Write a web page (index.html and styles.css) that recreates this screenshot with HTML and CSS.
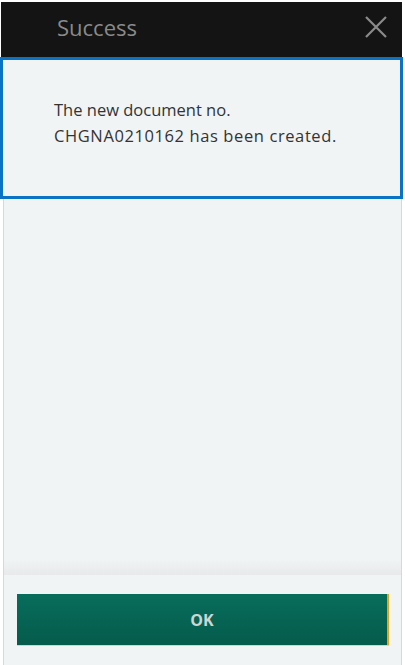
FILE: index.html
```html
<!DOCTYPE html>
<html>
<head>
<meta charset="utf-8">
<link rel="stylesheet" href="styles.css">
</head>
<body>
<div class="dialog">
  <header class="header">
    <span class="title">Success</span>
    <svg class="close" width="22" height="22" viewBox="0 0 22 22">
      <path d="M1 1 L21 21 M21 1 L1 21" stroke="#8b8b8b" stroke-width="2.2" fill="none"/>
    </svg>
  </header>
  <section class="message">
    <p>The new document no.<br><span class="docno">CHGNA0210162 has been created.</span></p>
  </section>
  <div class="body"></div>
  <footer class="footer">
    <button class="ok">OK</button>
  </footer>
</div>
</body>
</html>
```
FILE: styles.css
```css
html, body {
  margin: 0;
  padding: 0;
  background: #ffffff;
  width: 405px;
  height: 665px;
  overflow: hidden;
  font-family: "Open Sans", "Noto Sans", sans-serif;
}
.dialog {
  display: flex;
  flex-direction: column;
  height: 663px;
  padding-top: 2px;
}
.header {
  height: 56px;
  margin: 0 3px 0 1px;
  background: #141414;
  display: flex;
  align-items: center;
  justify-content: space-between;
  padding: 0 15px 0 56px;
  box-sizing: border-box;
}
.title {
  color: #8a8a8a;
  font-size: 22px;
  font-weight: 500;
  line-height: 1;
  margin-top: -6px;
}
.close {
  display: block;
  margin-top: -6px;
}
.message {
  margin: -1px 2px 0 0;
  height: 142px;
  box-sizing: border-box;
  border: 3px solid #0a73c4;
  background: #f1f4f5;
  padding: 37px 0 0 51px;
}
.message p {
  margin: 0;
  font-size: 16.5px;
  line-height: 26px;
  color: #333333;
}
.docno {
  letter-spacing: 0.6px;
}
.body {
  flex: 1;
  margin: 0 3px 0 0;
  background: linear-gradient(#f1f4f5 0, #f1f4f5 calc(100% - 16px), #e7e9eb 100%);
  border-left: 1px solid #d8d8d8;
  border-right: 1px solid #d8d8d8;
  margin-left: 3px;
}
.footer {
  height: 90px;
  margin: 0 3px 0 3px;
  background: #f1f4f5;
  border-left: 1px solid #d8d8d8;
  border-right: 1px solid #d8d8d8;
  padding: 19px 0 0 13px;
  box-sizing: border-box;
}
.ok {
  display: block;
  width: 372px;
  height: 51px;
  border: 0;
  border-right: 2px solid #e8a317;
  background: linear-gradient(#086d5b, #055b4c);
  color: #ccd6d2;
  font-family: "Open Sans", "Noto Sans", sans-serif;
  font-weight: 700;
  font-size: 16px;
  padding: 0;
  box-shadow: 0 1px 0 -1px #f1f4f5, 0 1px 0 0 #b9dcdc;
}
```
